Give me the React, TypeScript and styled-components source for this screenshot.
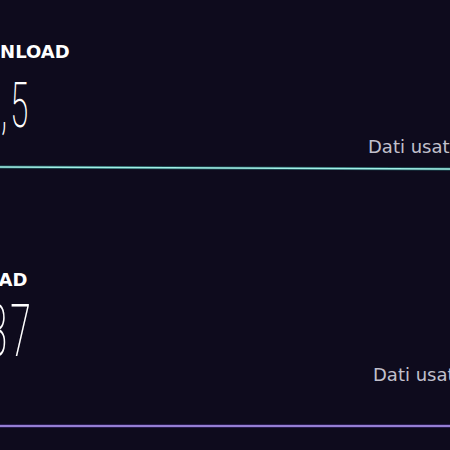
import React from "react";
import styled, { createGlobalStyle } from "styled-components";

const Global = createGlobalStyle`
  html, body { margin: 0; padding: 0; background: #0e0b1d; }
  body { width: 450px; height: 450px; overflow: hidden; }
`;

const Page = styled.div`
  width: 450px;
  height: 450px;
  overflow: hidden;
  background: #0e0b1d;
  display: flex;
  flex-direction: column;
`;

const Section = styled.section<{ $top: number }>`
  display: flex;
  flex-direction: column;
  padding-top: ${(p) => p.$top}px;
`;

const Left = styled.div<{ $shift: number }>`
  margin-left: ${(p) => p.$shift}px;
  display: flex;
  flex-direction: column;
`;

const Label = styled.div`
  font-family: "DejaVu Sans", "Open Sans", sans-serif;
  font-weight: 700;
  font-size: 18px;
  line-height: 22px;
  color: #ffffff;
  white-space: nowrap;
`;

const Value = styled.div<{ $size: number; $gap: number; $indent: number }>`
  margin-top: ${(p) => p.$gap}px;
  margin-left: ${(p) => p.$indent}px;
  font-family: "Roboto", "DejaVu Sans", sans-serif;
  font-weight: 200;
  font-size: ${(p) => p.$size}px;
  line-height: ${(p) => Math.round(p.$size * 0.9)}px;
  letter-spacing: 5.8px;
  color: #ffffff;
  white-space: nowrap;
  transform: scaleX(0.52);
  transform-origin: left center;
`;

const Usage = styled.div<{ $gap: number; $x: number }>`
  margin-top: ${(p) => p.$gap}px;
  padding-left: ${(p) => p.$x}px;
  font-family: "DejaVu Sans", "Open Sans", sans-serif;
  font-weight: 400;
  font-size: 18px;
  line-height: 22px;
  color: #c1c0cc;
  white-space: nowrap;
`;

const Graph = styled.svg<{ $gap: number }>`
  display: block;
  margin-top: ${(p) => p.$gap}px;
  width: 450px;
  height: 8px;
  flex-shrink: 0;
`;

type Props = {
  label: string;
  value: string;
  usage: string;
  top: number;
  shift: number;
  indent: number;
  size: number;
  valueGap: number;
  usageGap: number;
  usageX: number;
  graphGap: number;
  glow: string;
  core: string;
  y0: number;
  y1: number;
};

function Meter(p: Props) {
  const d = `M0 ${p.y0} L450 ${p.y1}`;
  return (
    <Section $top={p.top}>
      <Left $shift={p.shift}>
        <Label>{p.label}</Label>
        <Value $size={p.size} $gap={p.valueGap} $indent={p.indent}>
          {p.value}
        </Value>
      </Left>
      <Usage $gap={p.usageGap} $x={p.usageX}>
        {p.usage}
      </Usage>
      <Graph $gap={p.graphGap} viewBox="0 0 450 8">
        <path d={d} stroke={p.glow} strokeWidth={3.2} fill="none" opacity={0.55} />
        <path d={d} stroke={p.core} strokeWidth={1.6} fill="none" />
      </Graph>
    </Section>
  );
}

export default function App() {
  return (
    <Page>
      <Global />
      <Meter
        label="DOWNLOAD"
        value="27,5"
        usage="Dati usati 48,2 MB"
        top={41}
        shift={-50}
        indent={9}
        size={63}
        valueGap={14}
        usageGap={2}
        usageX={368}
        graphGap={6}
        glow="#2f9c98"
        core="#a2efe6"
        y0={3}
        y1={5}
      />
      <Meter
        label="UPLOAD"
        value="8,37"
        usage="Dati usati 12,4 MB"
        top={97}
        shift={-55}
        indent={8}
        size={72}
        valueGap={8}
        usageGap={0}
        usageX={373}
        graphGap={36}
        glow="#6a4fc8"
        core="#b29af0"
        y0={4}
        y1={4}
      />
    </Page>
  );
}
